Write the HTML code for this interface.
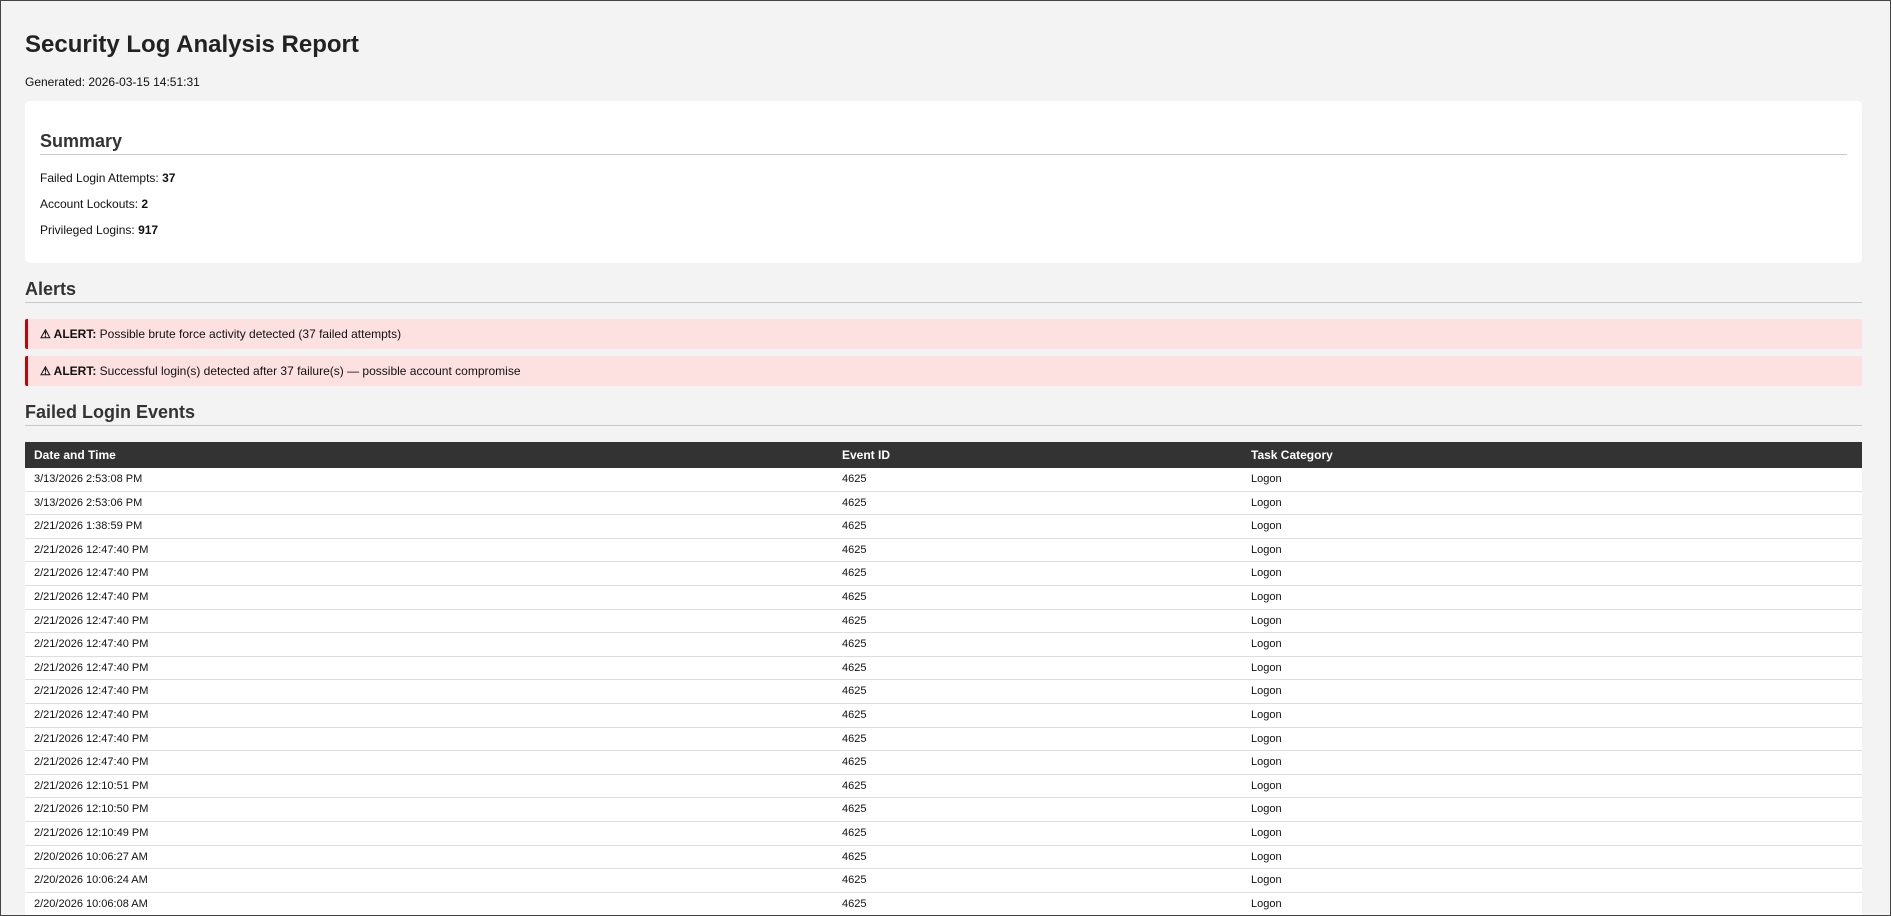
<!DOCTYPE html>
<html><head><meta charset="utf-8"><style>
html,body{margin:0;padding:0;width:1891px;height:916px;overflow:hidden;}
body{background:#f3f3f3;font-family:"Liberation Sans",Arial,sans-serif;color:#111;position:relative;}
.frame{position:absolute;left:0;top:0;width:1889px;height:914px;border:1px solid #444;pointer-events:none;z-index:5;}
.a{position:absolute;line-height:1;white-space:nowrap;}
h1{font-size:24px;font-weight:bold;color:#222;margin:0;}
.h2{font-size:18px;font-weight:bold;color:#333;}
.card{position:absolute;left:25px;top:101px;width:1837px;height:162px;background:#fff;border-radius:5px;}
.line{position:absolute;height:1px;border-top:1px solid #c8c8c8;}
.alert{position:absolute;left:25px;width:1834px;height:30px;background:#fde0e0;border-left:3px solid #c00;border-radius:2px;font-size:12px;line-height:30px;}
.alert span{position:absolute;left:12px;}
table{position:absolute;left:25px;top:442px;width:1837px;border-collapse:separate;border-spacing:0;background:#fff;}
th{background:#333;color:#fff;font-size:12px;font-weight:bold;text-align:left;height:26px;padding:0 0 0 9px;}
td{font-size:11px;line-height:22.6px;padding:0 0 0 9px;border-bottom:1px solid #ddd;color:#111;}
</style></head><body>
<div class="frame"></div>
<h1 class="a" style="left:25px;top:33px;">Security Log Analysis Report</h1>
<div class="a" style="left:25px;top:76px;font-size:12px;">Generated: 2026-03-15 14:51:31</div>
<div class="card">
  <div class="a h2" style="left:15px;top:31px;">Summary</div>
  <div class="line" style="left:15px;top:53px;width:1807px;"></div>
  <div class="a" style="left:15px;top:71px;font-size:12px;">Failed Login Attempts: <b>37</b></div>
  <div class="a" style="left:15px;top:97px;font-size:12px;">Account Lockouts: <b>2</b></div>
  <div class="a" style="left:15px;top:123px;font-size:12px;">Privileged Logins: <b>917</b></div>
</div>
<div class="a h2" style="left:25px;top:280px;">Alerts</div>
<div class="line" style="left:25px;top:302px;width:1837px;"></div>
<div class="alert" style="top:319px;"><span><b>⚠ ALERT:</b> Possible brute force activity detected (37 failed attempts)</span></div>
<div class="alert" style="top:356px;"><span><b>⚠ ALERT:</b> Successful login(s) detected after 37 failure(s) — possible account compromise</span></div>
<div class="a h2" style="left:25px;top:403px;">Failed Login Events</div>
<div class="line" style="left:25px;top:425px;width:1837px;"></div>
<table>
<colgroup><col style="width:808px"><col style="width:409px"><col></colgroup>
<tr><th>Date and Time</th><th>Event ID</th><th>Task Category</th></tr>
<tr><td>3/13/2026 2:53:08 PM</td><td>4625</td><td>Logon</td></tr>
<tr><td>3/13/2026 2:53:06 PM</td><td>4625</td><td>Logon</td></tr>
<tr><td>2/21/2026 1:38:59 PM</td><td>4625</td><td>Logon</td></tr>
<tr><td>2/21/2026 12:47:40 PM</td><td>4625</td><td>Logon</td></tr>
<tr><td>2/21/2026 12:47:40 PM</td><td>4625</td><td>Logon</td></tr>
<tr><td>2/21/2026 12:47:40 PM</td><td>4625</td><td>Logon</td></tr>
<tr><td>2/21/2026 12:47:40 PM</td><td>4625</td><td>Logon</td></tr>
<tr><td>2/21/2026 12:47:40 PM</td><td>4625</td><td>Logon</td></tr>
<tr><td>2/21/2026 12:47:40 PM</td><td>4625</td><td>Logon</td></tr>
<tr><td>2/21/2026 12:47:40 PM</td><td>4625</td><td>Logon</td></tr>
<tr><td>2/21/2026 12:47:40 PM</td><td>4625</td><td>Logon</td></tr>
<tr><td>2/21/2026 12:47:40 PM</td><td>4625</td><td>Logon</td></tr>
<tr><td>2/21/2026 12:47:40 PM</td><td>4625</td><td>Logon</td></tr>
<tr><td>2/21/2026 12:10:51 PM</td><td>4625</td><td>Logon</td></tr>
<tr><td>2/21/2026 12:10:50 PM</td><td>4625</td><td>Logon</td></tr>
<tr><td>2/21/2026 12:10:49 PM</td><td>4625</td><td>Logon</td></tr>
<tr><td>2/20/2026 10:06:27 AM</td><td>4625</td><td>Logon</td></tr>
<tr><td>2/20/2026 10:06:24 AM</td><td>4625</td><td>Logon</td></tr>
<tr><td>2/20/2026 10:06:08 AM</td><td>4625</td><td>Logon</td></tr>
</table>
</body></html>
